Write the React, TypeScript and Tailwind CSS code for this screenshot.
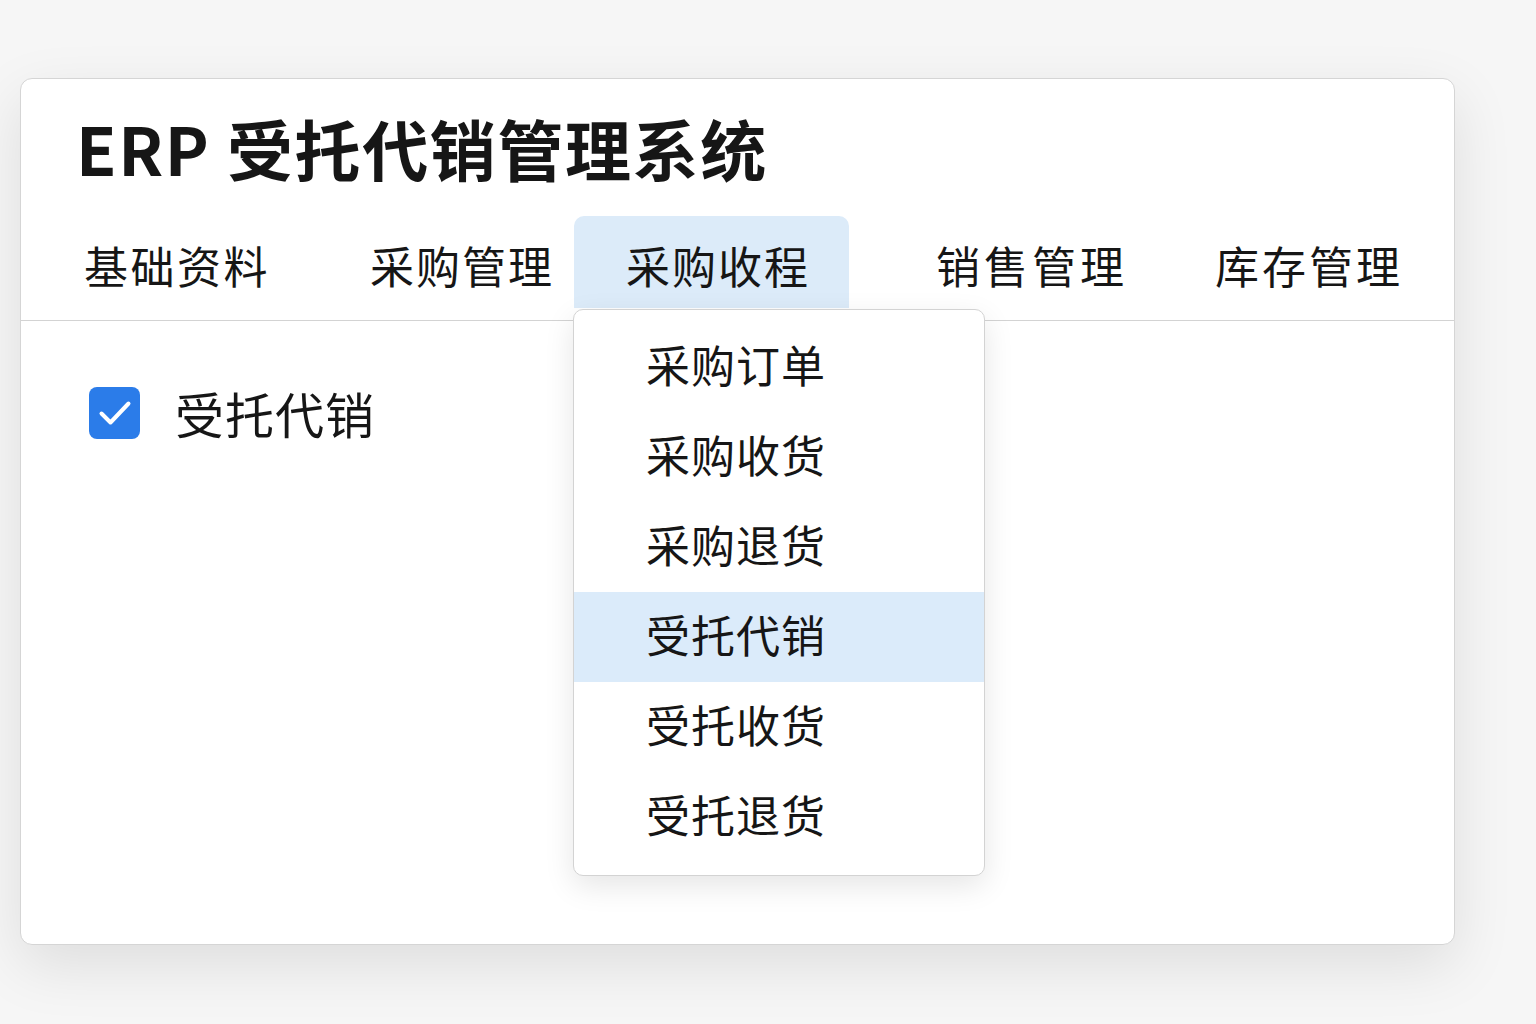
import React from "react";

const font = { fontFamily: '"Noto Sans CJK SC", "Noto Sans", sans-serif' };

export default function App() {
  const items = ["采购订单", "采购收货", "采购退货", "受托代销", "受托收货", "受托退货"];
  return (
    <div
      className="min-h-[1024px] w-[1536px] bg-[#f6f6f6] pt-[78px] pl-[20px] text-[#161616]"
      style={font}
    >
      <div className="relative h-[867px] w-[1435px] rounded-[12px] border border-[#d5d5d5] bg-white shadow-[0_20px_60px_rgba(0,0,0,0.10)]">
        <h1 className="pl-[55px] pt-[35px] text-[66px] font-bold leading-[66px] tracking-[1.6px]">
          ERP 受托代销管理系统
        </h1>
        <div className="mt-[36px] flex h-[105px] items-start border-b border-[#d3d3d3] text-[44px] leading-[44px] tracking-[2px]">
          <div className="ml-[63px] flex h-[92px] items-center pt-[6px] tracking-[2.5px]">基础资料</div>
          <div className="ml-[100px] flex h-[92px] items-center pt-[6px]">采购管理</div>
          <div className="relative ml-[20px]">
            <div className="flex h-[92px] w-[275px] items-center rounded-t-[10px] bg-[#dcebf9] pl-[52px] pt-[6px]">
              采购收程
            </div>
            <div className="absolute left-[-1px] top-[93px] z-10 w-[412px] rounded-[10px] border border-[#d3d3d3] bg-white pt-[12px] pb-[13px] tracking-[1px] shadow-[0_10px_30px_rgba(0,0,0,0.10)]">
              {items.map((t) => (
                <div
                  key={t}
                  className={
                    "flex h-[90px] items-center pb-[7px] pl-[72px] " +
                    (t === "受托代销" ? "bg-[#dbebfa]" : "")
                  }
                >
                  {t}
                </div>
              ))}
            </div>
          </div>
          <div className="ml-[87px] flex h-[92px] items-center pt-[6px] tracking-[4px]">销售管理</div>
          <div className="ml-[87px] flex h-[92px] items-center pt-[6px] tracking-[3px]">库存管理</div>
        </div>
        <div className="flex items-center pl-[68px] pt-[66px]">
          <div className="flex h-[52px] w-[51px] items-center justify-center rounded-[8px] bg-[#2b7ce9]">
            <svg width="34" height="28" viewBox="0 0 34 28" fill="none">
              <path d="M3.5 14.5l9 9L30.5 4.5" stroke="white" strokeWidth="4" strokeLinecap="round" strokeLinejoin="round" />
            </svg>
          </div>
          <span className="ml-[35px] text-[49px] leading-[52px] tracking-[1px]">受托代销</span>
        </div>
      </div>
    </div>
  );
}
